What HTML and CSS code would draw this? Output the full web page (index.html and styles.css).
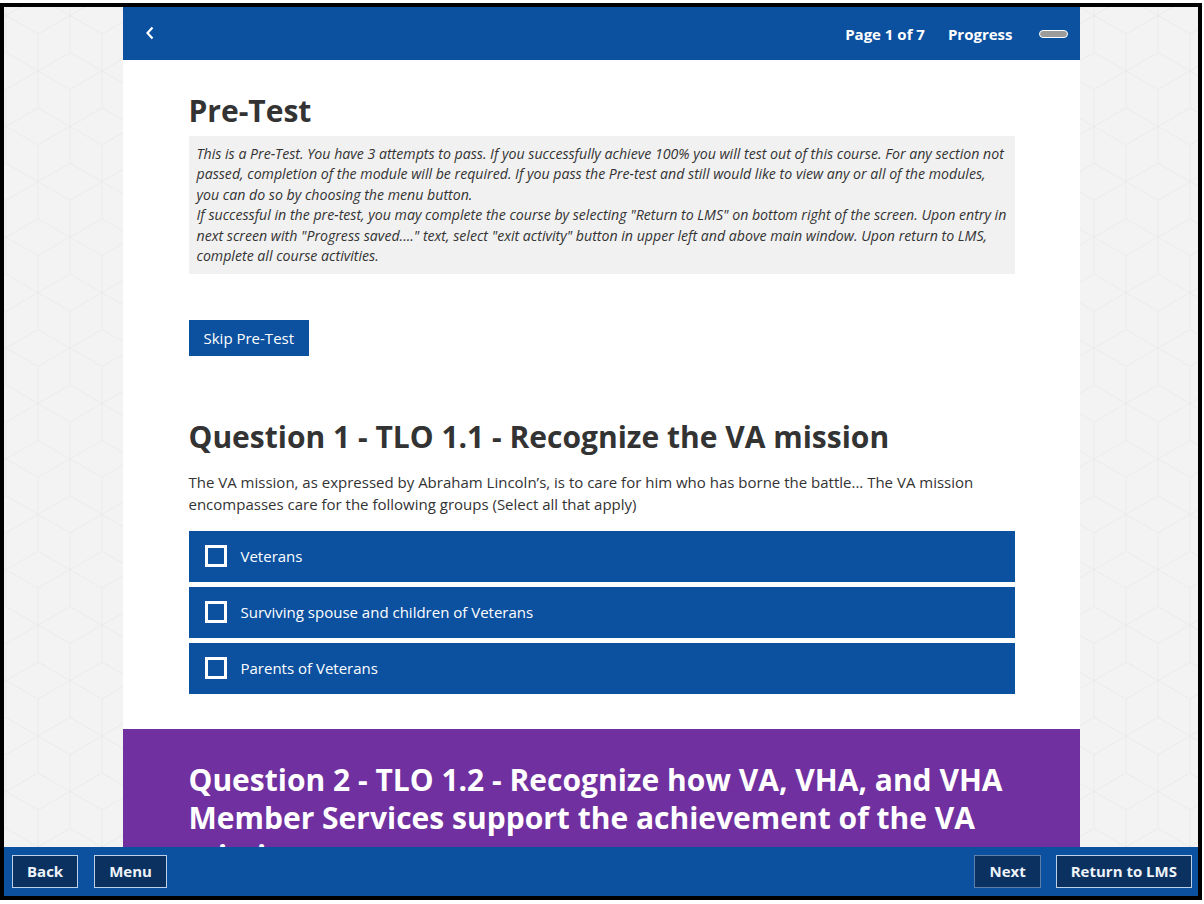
FILE: index.html
```html
<!DOCTYPE html>
<html lang="en">
<head>
<meta charset="utf-8">
<title>Pre-Test</title>
<link rel="stylesheet" href="styles.css">
</head>
<body>
<div class="frame">
  <svg class="backdrop" aria-hidden="true">
    <defs>
      <pattern id="cubes" width="64" height="110.85" patternUnits="userSpaceOnUse" x="2" y="-10">
        <path d="M32 0 L64 18.475 L64 55.425 L32 73.9 L0 55.425 L0 18.475 Z M0 18.475 L32 36.95 L64 18.475 M32 36.95 L32 73.9 M0 0 L0 18.475 M64 0 L64 18.475 M0 55.425 L32 73.9 L64 55.425 M32 73.9 L32 110.85 M0 92.375 L32 73.9 L64 92.375 M0 92.375 L0 110.85 M64 92.375 L64 110.85" fill="none" stroke="#ebebeb" stroke-width="1"/>
      </pattern>
    </defs>
    <rect width="100%" height="100%" fill="url(#cubes)"/>
  </svg>

  <div class="column">
    <header class="topbar">
      <button class="back-chevron" aria-label="Back">
        <svg width="10" height="14" viewBox="0 0 10 14"><path d="M7.5 1.5 L2.5 7 L7.5 12.5" fill="none" stroke="#fff" stroke-width="2.2"/></svg>
      </button>
      <div class="status">
        <span class="page-count">Page 1 of 7</span>
        <span class="progress-label">Progress</span>
        <span class="progress-bar"></span>
      </div>
    </header>

    <main class="content">
      <h1 class="title">Pre-Test</h1>
      <div class="notice">
        <p>This is a Pre-Test. You have 3 attempts to pass. If you successfully achieve 100% you will test out of this course. For any section not passed, completion of the module will be required. If you pass the Pre-test and still would like to view any or all of the modules, you can do so by choosing the menu button.</p>
        <p>If successful in the pre-test, you may complete the course by selecting "Return to LMS" on bottom right of the screen. Upon entry in next screen with "Progress saved...." text, select "exit activity" button in upper left and above main window. Upon return to LMS, complete all course activities.</p>
      </div>

      <button class="skip-btn">Skip Pre-Test</button>

      <h2 class="question-title">Question 1 - TLO 1.1 - Recognize the VA mission</h2>
      <p class="question-text">The VA mission, as expressed by Abraham Lincoln’s, is to care for him who has borne the battle... The VA mission encompasses care for the following groups (Select all that apply)</p>

      <ul class="options">
        <li class="option"><span class="checkbox"></span><span>Veterans</span></li>
        <li class="option"><span class="checkbox"></span><span>Surviving spouse and children of Veterans</span></li>
        <li class="option"><span class="checkbox"></span><span>Parents of Veterans</span></li>
      </ul>
    </main>

    <section class="next-question">
      <h2 class="question-title light">Question 2 - TLO 1.2 - Recognize how VA, VHA, and VHA Member Services support the achievement of the VA mission</h2>
    </section>
  </div>

  <footer class="footer">
    <div class="footer-group">
      <button class="nav-btn">Back</button>
      <button class="nav-btn">Menu</button>
    </div>
    <div class="footer-group">
      <button class="nav-btn dim">Next</button>
      <button class="nav-btn">Return to LMS</button>
    </div>
  </footer>
</div>
</body>
</html>
```

FILE: styles.css
```css
* { box-sizing: border-box; }

html, body {
  margin: 0;
  padding: 0;
  background: #ffffff;
}

body {
  font-family: "Open Sans", "Noto Sans", "Liberation Sans", sans-serif;
  color: #333333;
  padding-top: 3px;
}

.frame {
  position: relative;
  width: 1202px;
  height: 897px;
  border: 4px solid #000;
  background: #f3f3f3;
  overflow: hidden;
}

.backdrop {
  position: absolute;
  inset: 0;
  width: 100%;
  height: 100%;
}

.column {
  position: relative;
  width: 957px;
  margin: 0 auto;
  background: #ffffff;
  min-height: 100%;
}

.topbar {
  height: 53px;
  background: #0b51a0;
  display: flex;
  align-items: center;
  justify-content: space-between;
  padding: 0 12px 0 22px;
  color: #ffffff;
}

.back-chevron {
  background: none;
  border: 0;
  padding: 0 0 2px 0;
  display: flex;
  cursor: pointer;
}

.status {
  display: flex;
  align-items: center;
  font-weight: 700;
  font-size: 15px;
}

.page-count { margin-right: 23px; }
.progress-label { margin-right: 26px; }

.progress-bar {
  width: 29px;
  height: 8px;
  border: 1.5px solid #ffffff;
  border-radius: 4px;
  background: #9b9b9b;
  display: block;
}

.content {
  padding: 31px 65px 35px 66px;
}

.title {
  margin: 0 0 5px;
  font-size: 30px;
  line-height: 40px;
  font-weight: 700;
  color: #333333;
}

.notice {
  background: #f1f1f1;
  padding: 8px 8px;
  font-style: italic;
  font-size: 14.15px;
  line-height: 20.4px;
  color: #333333;
}

.notice p { margin: 0; }

.skip-btn {
  display: block;
  margin-top: 46px;
  height: 36px;
  padding: 0 15px 1px;
  background: #0b51a0;
  color: #ffffff;
  border: 0;
  font-family: inherit;
  font-size: 15px;
}

.question-title {
  margin: 61px 0 14px;
  font-size: 30px;
  line-height: 40px;
  font-weight: 700;
  color: #333333;
}

.question-text {
  margin: 0 0 16px;
  font-size: 15px;
  line-height: 22px;
}

.options {
  list-style: none;
  margin: 0;
  padding: 0;
  display: flex;
  flex-direction: column;
  gap: 5px;
}

.option {
  height: 51px;
  background: #0b51a0;
  color: #ffffff;
  display: flex;
  align-items: center;
  padding: 0 0 1px 16px;
  gap: 14px;
  font-size: 15px;
}

.checkbox {
  width: 22px;
  height: 22px;
  border: 3px solid #ffffff;
  flex: none;
}

.next-question {
  background: #7030a0;
  padding: 32px 65px 60px 66px;
}

.question-title.light {
  margin: 0;
  color: #ffffff;
  line-height: 38px;
}

.footer {
  position: absolute;
  left: 0;
  right: 0;
  bottom: 0;
  height: 49px;
  background: #0b51a0;
  display: flex;
  align-items: center;
  justify-content: space-between;
  padding: 0 6px 0 8px;
}

.footer-group {
  display: flex;
  gap: 16px;
}

.footer-group + .footer-group { gap: 15px; }

.nav-btn {
  height: 33px;
  padding: 0 14px 1px;
  background: #0a3160;
  color: #eef3f9;
  border: 1px solid #bcd0e8;
  font-family: inherit;
  font-weight: 700;
  font-size: 15px;
}

.nav-btn.dim {
  border-color: #5f7fa8;
}
```
